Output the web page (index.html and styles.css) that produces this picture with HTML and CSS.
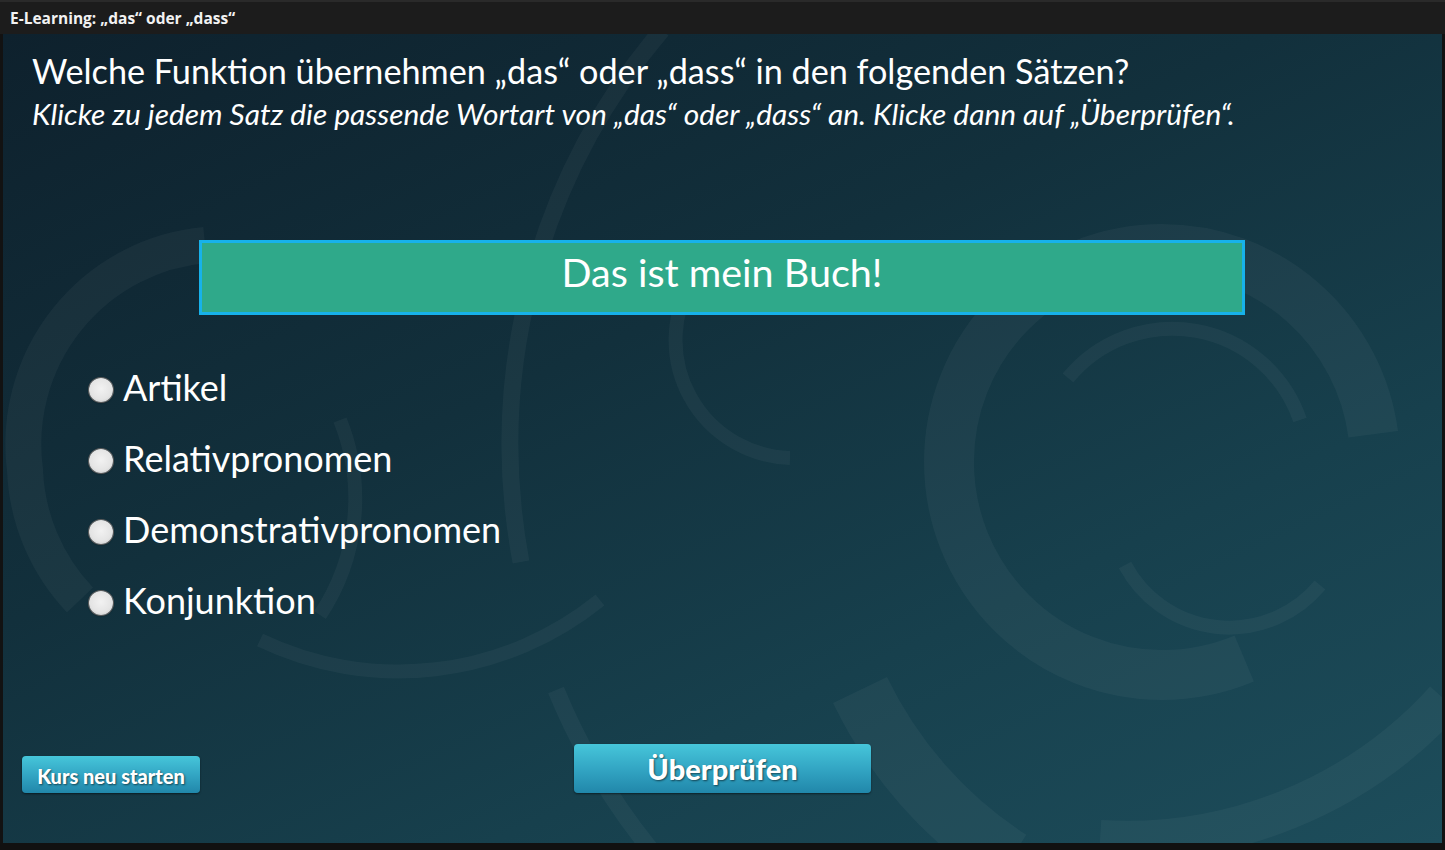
FILE: index.html
```html
<!DOCTYPE html>
<html lang="de">
<head>
<meta charset="utf-8">
<title>E-Learning: „das“ oder „dass“</title>
<link rel="stylesheet" href="styles.css">
</head>
<body>
<div class="window">
  <div class="titlebar">E-Learning: „das“ oder „dass“</div>
  <main class="stage">
    <svg class="deco" width="1439" height="809" viewBox="3 34 1439 809" aria-hidden="true">
      <g fill="none" stroke="rgba(255,255,255,0.04)">
        <path d="M 662 30 A 640 640 0 0 0 521 562" stroke-width="17"/>
        <path d="M 556 690 A 640 640 0 0 0 668 870" stroke-width="17"/>
        <path d="M 692 280 A 118 118 0 0 0 790 458" stroke-width="14"/>
        <circle cx="1162" cy="462" r="213" stroke-width="50" stroke-dasharray="1060 80 200 3000" stroke-dashoffset="-250"/>
        <path d="M 1068 378 A 135 135 0 0 1 1300 420" stroke-width="14"/>
        <path d="M 1125 565 A 118 118 0 0 0 1320 585" stroke-width="14"/>
        <path d="M 205 245 A 200 200 0 0 0 25 470 A 200 200 0 0 0 80 600" stroke-width="36"/>
        <path d="M 340 420 A 210 210 0 0 1 320 615" stroke-width="14"/>
        <path d="M 600 600 A 320 320 0 0 1 260 640" stroke-width="14"/>
        <path d="M 860 690 A 420 420 0 0 0 1010 860" stroke-width="60"/>
        <path d="M 1100 840 A 430 430 0 0 0 1445 700" stroke-width="40"/>
      </g>
    </svg>
    <header class="intro">
      <h1 class="question">Welche Funktion übernehmen „das“ oder „dass“ in den folgenden Sätzen?</h1>
      <p class="instruction">Klicke zu jedem Satz die passende Wortart von „das“ oder „dass“ an. Klicke dann auf „Überprüfen“.</p>
    </header>
    <div class="sentence">Das ist mein Buch!</div>
    <ul class="options">
      <li class="option"><span class="radio"></span><span class="label">Artikel</span></li>
      <li class="option"><span class="radio"></span><span class="label">Relativpronomen</span></li>
      <li class="option"><span class="radio"></span><span class="label">Demonstrativpronomen</span></li>
      <li class="option"><span class="radio"></span><span class="label">Konjunktion</span></li>
    </ul>
    <footer class="actions">
      <button class="btn btn-small">Kurs neu starten</button>
      <button class="btn btn-large">Überprüfen</button>
    </footer>
  </main>
  <div class="bottombar"></div>
</div>
</body>
</html>
```
FILE: styles.css
```css
* { box-sizing: border-box; }
html, body { margin: 0; padding: 0; }
body {
  width: 1445px;
  height: 850px;
  overflow: hidden;
  background: #121212;
  font-family: "Lato", "Open Sans", sans-serif;
  color: #fff;
}
.window {
  display: flex;
  flex-direction: column;
  height: 850px;
}
.titlebar {
  height: 34px;
  flex: none;
  background: #1c1c1c;
  border-top: 2px solid #2a2a2a;
  padding: 6px 0 0 10px;
  font-family: "Open Sans", sans-serif;
  font-weight: 700;
  font-size: 15.5px;
  line-height: 20px;
  color: #f2f2f2;
}
.stage {
  position: relative;
  flex: none;
  height: 809px;
  margin: 0 3px;
  overflow: hidden;
  background: linear-gradient(155deg, #0e212d 0%, #12303c 40%, #17404d 70%, #1d4d5b 100%);
  display: flex;
  flex-direction: column;
}
.deco {
  position: absolute;
  left: 0;
  top: 0;
  pointer-events: none;
}
.intro {
  position: relative;
  padding: 15px 0 0 29px;
}
.question {
  margin: 0;
  font-weight: 400;
  font-size: 34.2px;
  line-height: 44px;
  color: #fff;
}
.instruction {
  margin: 0;
  font-style: italic;
  font-size: 29.9px;
  line-height: 40px;
  color: #fff;
}
.sentence {
  position: relative;
  margin: 107px 0 0 196px;
  width: 1046px;
  height: 75px;
  border: 3px solid #17b2ea;
  background: #2fa98a;
  display: flex;
  align-items: center;
  justify-content: center;
  font-size: 39.5px;
  padding-bottom: 12px;
}
.options {
  position: relative;
  list-style: none;
  margin: 50px 0 0 86px;
  padding: 0;
  display: flex;
  flex-direction: column;
  gap: 27px;
}
.option {
  display: flex;
  align-items: center;
  gap: 10px;
  height: 44px;
}
.radio {
  width: 24px;
  height: 24px;
  margin-top: 6px;
  border-radius: 50%;
  background: radial-gradient(circle at 50% 45%, #f2f2f2 0%, #e4e4e4 60%, #b9b9b9 100%);
  box-shadow: 0 0 0 1px #5e5e5e, 0 1px 2px rgba(0,0,0,0.4);
}
.label {
  font-size: 36px;
  line-height: 44px;
}
.actions {
  position: relative;
  margin-top: auto;
  padding: 0 0 50px 19px;
  display: flex;
  align-items: flex-end;
  gap: 374px;
}
.btn {
  border: 0;
  border-radius: 4px;
  color: #fff;
  font-family: "Lato", sans-serif;
  font-weight: 900;
  background: linear-gradient(180deg, #46c6da 0%, #33a6c4 50%, #2187aa 100%);
  box-shadow: 0 1px 2px rgba(0,0,0,0.5);
  text-shadow: 1px 1px 2px rgba(0,0,0,0.55);
  cursor: pointer;
  padding: 0;
}
.btn-small {
  width: 178px;
  height: 37px;
  font-size: 20px;
  padding-top: 2px;
}
.btn-large {
  width: 297px;
  height: 49px;
  font-size: 29px;
}
.bottombar {
  flex: 1;
  background: #111;
}
```
